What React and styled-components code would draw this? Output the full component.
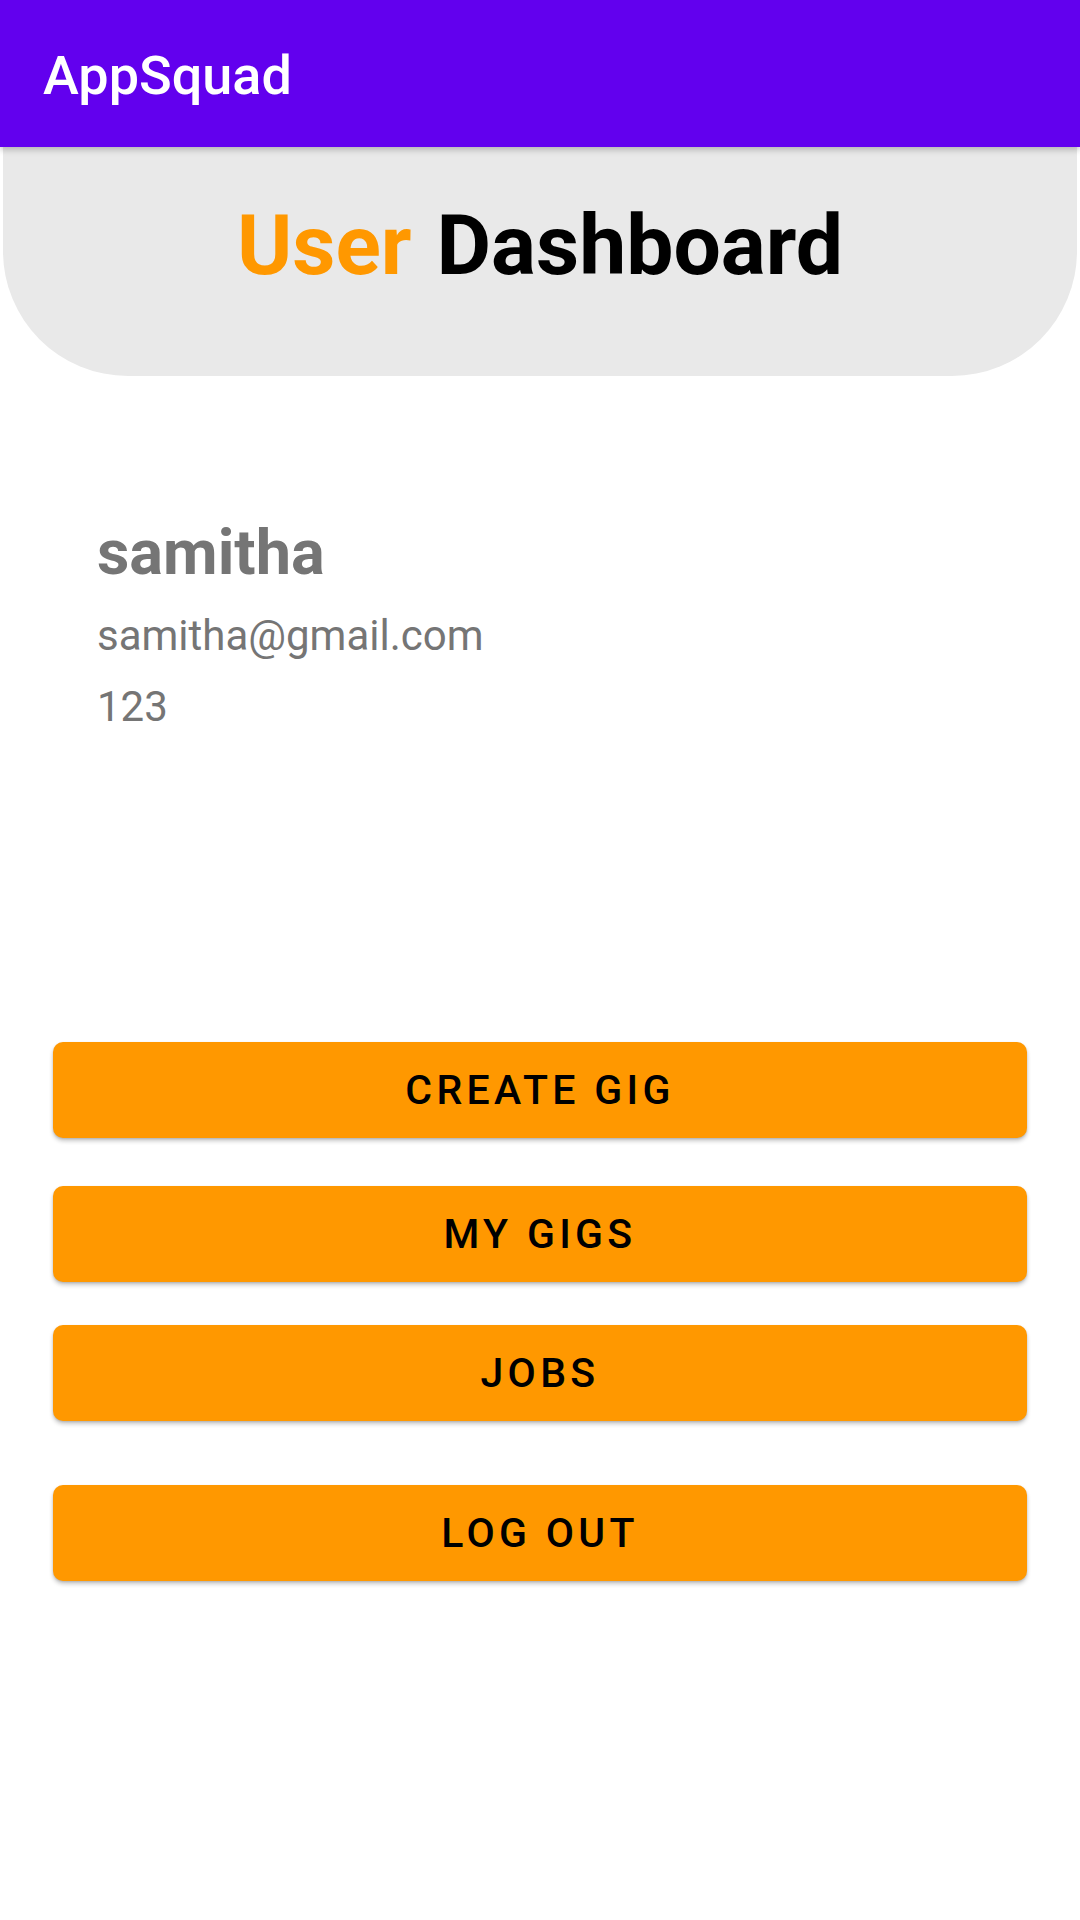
import React from "react";
import styled, { createGlobalStyle } from "styled-components";

const GlobalStyle = createGlobalStyle`
  html, body {
    margin: 0;
    padding: 0;
    background: #ffffff;
    font-family: Roboto, "Noto Sans", "Liberation Sans", sans-serif;
  }
`;

const Screen = styled.div`
  width: 1080px;
  min-height: 1920px;
  display: flex;
  flex-direction: column;
  background: #ffffff;
`;

const AppBar = styled.header`
  position: relative;
  z-index: 1;
  height: 147px;
  box-sizing: border-box;
  padding: 5px 43px 0;
  display: flex;
  align-items: center;
  background: #6200ee;
  box-shadow: 0 3px 6px rgba(0, 0, 0, 0.22);
`;

const AppTitle = styled.h1`
  margin: 0;
  font-size: 54px;
  line-height: 54px;
  font-weight: 500;
  color: #ffffff;
`;

const Header = styled.section`
  height: 229px;
  margin: 0 3px;
  box-sizing: border-box;
  padding-top: 56px;
  display: flex;
  justify-content: center;
  background: #e9e9e9;
  border-radius: 0 0 125px 125px;
`;

const Heading = styled.h2`
  margin: 0;
  font-size: 84px;
  line-height: 85px;
  font-weight: 700;
  color: #000000;
`;

const Accent = styled.span`
  margin-right: 4px;
  color: #ff9800;
`;

const Profile = styled.div`
  margin-top: 141px;
  padding-left: 97px;
  display: flex;
  flex-direction: column;
  color: #757575;
`;

const Name = styled.div`
  font-size: 63px;
  line-height: 72px;
  font-weight: 700;
`;

const Detail = styled.div`
  margin-top: ${(p) => p.$top}px;
  font-size: 42px;
  line-height: 48px;
  font-weight: 400;
`;

const Actions = styled.div`
  margin-top: 311px;
  padding: 0 53px;
  display: flex;
  flex-direction: column;
`;

const ActionButton = styled.button`
  margin-top: ${(p) => p.$top || 0}px;
  height: 96px;
  width: 100%;
  display: flex;
  align-items: center;
  justify-content: center;
  border: none;
  border-radius: 10px;
  background: #ff9800;
  color: #000000;
  font-family: Roboto, "Noto Sans", sans-serif;
  font-size: 41px;
  line-height: 42px;
  font-weight: 500;
  letter-spacing: 0.105em;
  text-transform: uppercase;
  box-shadow: 0 3px 4px rgba(0, 0, 0, 0.22), 0 1px 2px rgba(0, 0, 0, 0.12);
  cursor: pointer;
`;

const App = () => {
  return (
    <>
      <GlobalStyle />
      <Screen>
        <AppBar>
          <AppTitle>AppSquad</AppTitle>
        </AppBar>
        <Header>
          <Heading>
            <Accent>User</Accent> Dashboard
          </Heading>
        </Header>
        <Profile>
          <Name>samitha</Name>
          <Detail $top={23}>samitha@gmail.com</Detail>
          <Detail $top={23}>123</Detail>
        </Profile>
        <Actions>
          <ActionButton>Create Gig</ActionButton>
          <ActionButton $top={48}>My Gigs</ActionButton>
          <ActionButton $top={43}>Jobs</ActionButton>
          <ActionButton $top={64}>Log Out</ActionButton>
        </Actions>
      </Screen>
    </>
  );
};

export default App;
